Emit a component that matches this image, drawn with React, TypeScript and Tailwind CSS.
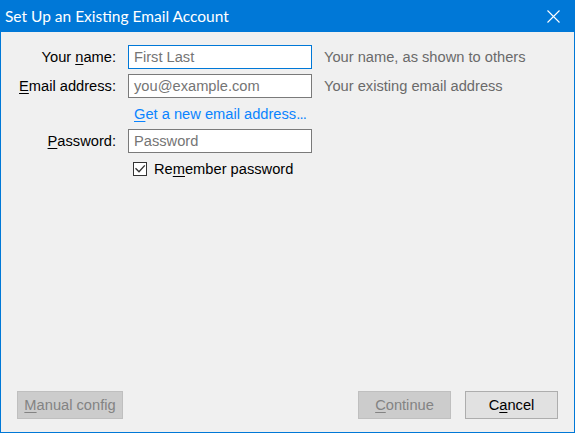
import React from "react";

const F = { fontFamily: '"Liberation Sans", Arial, sans-serif' };

function Row({ label, children }: { label: React.ReactNode; children: React.ReactNode }) {
  return (
    <div className="flex items-center h-[24px]">
      <div className="w-[115px] text-right text-[14.67px] text-black leading-none">{label}</div>
      <div className="ml-[12px] flex items-center">{children}</div>
    </div>
  );
}

export default function App() {
  return (
    <div
      className="w-[575px] h-[433px] flex flex-col bg-[#f0f0f0] border border-[#0078d7] overflow-hidden"
      style={F}
    >
      <div className="bg-[#0078d7] flex items-center justify-between shrink-0 -mx-px -mt-px pl-[5px] pr-[15px] h-[32px]">
        <span
          className="text-white text-[15.5px] leading-none mt-[2px]"
          style={{ fontFamily: 'Lato, "Noto Sans", sans-serif' }}
        >
          Set Up an Existing Email Account
        </span>
        <svg width="13" height="13" viewBox="0 0 13 13" className="mt-[1px]">
          <path d="M0.5 0.5 L12.5 12.5 M12.5 0.5 L0.5 12.5" stroke="white" strokeWidth="1.1" fill="none" />
        </svg>
      </div>

      <div className="flex flex-col pt-[13px] flex-1">
        <Row
          label={
            <>
              Your <span className="underline underline-offset-2">n</span>ame:
            </>
          }
        >
          <div className="w-[184px] h-[24px] border border-[#0078d7] bg-white flex items-center pl-[5px] text-[14.67px] text-[#757575]">
            First Last
          </div>
          <span className="ml-[12px] text-[14.67px] text-[#6a6a6a]">Your name, as shown to others</span>
        </Row>
        <div className="mt-[5px]">
          <Row
            label={
              <>
                <span className="underline underline-offset-2">E</span>mail address:
              </>
            }
          >
            <div className="w-[184px] h-[24px] border border-[#7a7a7a] bg-white flex items-center pl-[5px] text-[14.67px] text-[#757575]">
              you@example.com
            </div>
            <span className="ml-[12px] text-[14.67px] text-[#6a6a6a]">Your existing email address</span>
          </Row>
        </div>
        <div className="h-[31px] flex items-center pl-[133px]">
          <span className="text-[14.67px] text-[#0a84ff] leading-none mt-[1px]">
            <span className="underline underline-offset-2">G</span>et a new email address
            <span className="tracking-[-0.8px]">...</span>
          </span>
        </div>
        <Row
          label={
            <>
              <span className="underline underline-offset-2">P</span>assword:
            </>
          }
        >
          <div className="w-[184px] h-[24px] border border-[#7a7a7a] bg-white flex items-center pl-[5px] text-[14.67px] text-[#757575]">
            Password
          </div>
        </Row>
        <div className="mt-[4px] h-[24px] flex items-center pl-[132px]">
          <div className="w-[14px] h-[14px] border border-[#333333] bg-white relative">
            <svg width="12" height="12" viewBox="0 0 12 12" className="absolute left-0 top-0">
              <path d="M1.5 5.2 L5 8.7 L10.8 2.4" stroke="#333333" strokeWidth="1.4" fill="none" />
            </svg>
          </div>
          <span className="ml-[7px] text-[14.67px] text-black">
            Re<span className="underline underline-offset-2">m</span>ember password
          </span>
        </div>

        <div className="flex-1" />

        <div className="flex items-center pl-[16px] pr-[16px] pb-[13px]">
          <div className="w-[106px] h-[28px] bg-[#cccccc] border border-[#bfbfbf] flex items-center justify-center text-[14.67px] text-[#838383]">
            <span>
              <span className="underline underline-offset-2">M</span>anual config
            </span>
          </div>
          <div className="flex-1" />
          <div className="w-[93px] h-[28px] bg-[#cccccc] border border-[#bfbfbf] flex items-center justify-center text-[14.67px] text-[#838383]">
            <span>
              <span className="underline underline-offset-2">C</span>ontinue
            </span>
          </div>
          <div className="ml-[14px] w-[93px] h-[28px] bg-[#e1e1e1] border border-[#adadad] flex items-center justify-center text-[14.67px] text-black">
            <span>
              C<span className="underline underline-offset-2">a</span>ncel
            </span>
          </div>
        </div>
      </div>
    </div>
  );
}
